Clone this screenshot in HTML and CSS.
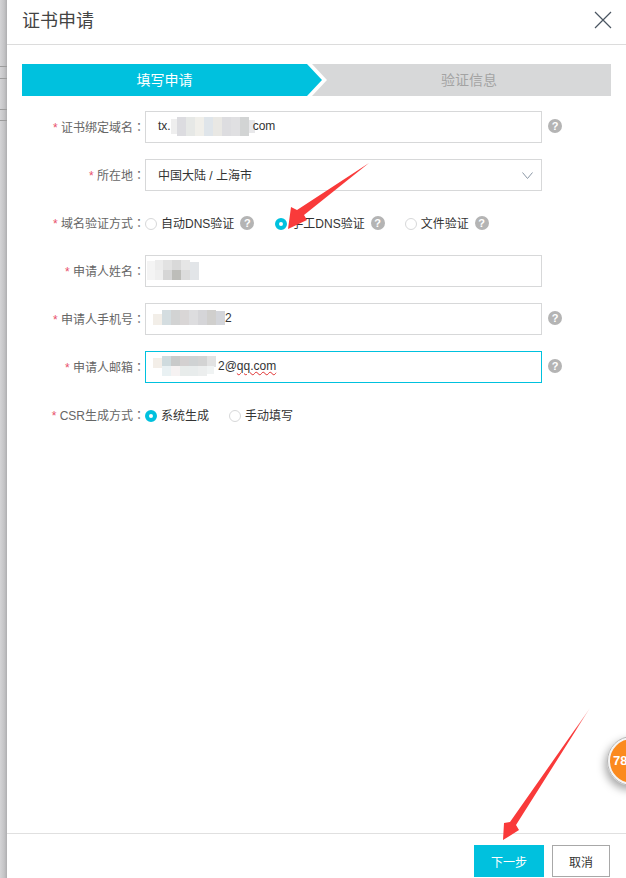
FILE: index.html
```html
<!DOCTYPE html>
<html>
<head>
    <meta charset="utf-8">
    <title>证书申请</title>
    <link rel="stylesheet" href="styles.css">
</head>
<body>
    <div class="page_edge"></div>
    <div class="dialog">
        <div class="dialog_head">
            <h1>证书申请</h1>
            <svg class="close_x" width="18" height="18" viewBox="0 0 18 18"><path d="M1 1L17 17M17 1L1 17" stroke="#4a5561" stroke-width="1.2" fill="none"/></svg>
        </div>

        <div class="dialog_body">
            <div class="steps">
                <div class="step step_on">填写申请</div>
                <svg class="step_tip" width="20" height="32" viewBox="0 0 20 32"><polygon points="0,0 5,0 20,16 5,32 0,32" fill="#fff"/><polygon points="0,0 15,16 0,32" fill="#00c1de"/></svg>
                <div class="step step_off">验证信息</div>
            </div>

            <div class="row">
                <div class="lbl"><span class="star">*</span> 证书绑定域名<span class="colon">：</span></div>
                <div class="field">
                    <span>tx.</span>
                    <svg class="smudge smudge_dom" width="84" height="19" viewBox="0 0 84 19">
                        <rect x="0" y="2" width="9" height="15" fill="#eeeeee"/><rect x="6" y="0" width="9" height="19" fill="#dcdce0"/><rect x="15" y="0" width="9" height="19" fill="#e6e8e6"/><rect x="24" y="0" width="9" height="19" fill="#f0efea"/><rect x="33" y="0" width="9" height="19" fill="#dfe5ea"/><rect x="42" y="0" width="9" height="19" fill="#e9e8e4"/><rect x="51" y="0" width="9" height="19" fill="#dddde0"/><rect x="60" y="0" width="9" height="19" fill="#e0e0e2"/><rect x="69" y="0" width="9" height="19" fill="#d2d4d4"/><rect x="78" y="3" width="6" height="13" fill="#e8e8ea"/>
                    </svg>
                    <span>com</span>
                </div>
                <span class="help">?</span>
            </div>

            <div class="row">
                <div class="lbl"><span class="star">*</span> 所在地<span class="colon">：</span></div>
                <div class="field">
                    <span>中国大陆 / 上海市</span>
                    <svg class="caret" width="11" height="7" viewBox="0 0 11 7"><path d="M0.5 0.5L5.5 6.5L10.5 0.5" stroke="#8a97a5" fill="none"/></svg>
                </div>
            </div>

            <div class="row">
                <div class="lbl"><span class="star">*</span> 域名验证方式<span class="colon">：</span></div>
                <div class="choices">
                    <span class="radio"></span><span class="opt">自动DNS验证</span><span class="help">?</span>
                    <span class="radio radio_on gap_l"></span><span class="opt">手工DNS验证</span><span class="help">?</span>
                    <span class="radio gap_m"></span><span class="opt">文件验证</span><span class="help">?</span>
                </div>
            </div>

            <div class="row">
                <div class="lbl"><span class="star">*</span> 申请人姓名<span class="colon">：</span></div>
                <div class="field field_flush">
                    <svg class="smudge" width="52" height="21" viewBox="0 0 52 21">
                        <rect x="0" y="1" width="8" height="19" fill="#f4f4f4"/><rect x="8" y="0" width="8" height="10" fill="#ececec"/><rect x="16" y="0" width="9" height="10" fill="#e2e2e2"/><rect x="25" y="0" width="9" height="10" fill="#d9d9d9"/><rect x="34" y="0" width="9" height="10" fill="#e6e6e6"/><rect x="43" y="2" width="9" height="8" fill="#e2e5e8"/><rect x="8" y="10" width="8" height="10" fill="#efefef"/><rect x="16" y="10" width="9" height="10" fill="#d6d6d6"/><rect x="25" y="10" width="9" height="10" fill="#bdbdb9"/><rect x="34" y="10" width="9" height="10" fill="#dcdcdc"/><rect x="43" y="10" width="9" height="10" fill="#e2e5e8"/>
                    </svg>
                </div>
            </div>

            <div class="row">
                <div class="lbl"><span class="star">*</span> 申请人手机号<span class="colon">：</span></div>
                <div class="field field_phone">
                    <svg class="smudge" width="72" height="16" viewBox="0 0 72 16">
                        <rect x="0" y="4" width="9" height="11" fill="#f2eee8"/><rect x="9" y="0" width="9" height="15" fill="#d4dde0"/><rect x="18" y="0" width="9" height="15" fill="#d2d3d3"/><rect x="27" y="0" width="9" height="15" fill="#d9d6d6"/><rect x="36" y="0" width="9" height="15" fill="#dddddf"/><rect x="45" y="0" width="9" height="15" fill="#d5d5d8"/><rect x="54" y="0" width="9" height="15" fill="#d0cfcd"/><rect x="63" y="1" width="9" height="14" fill="#d3d5da"/>
                    </svg>
                    <span>2</span>
                </div>
                <span class="help">?</span>
            </div>

            <div class="row">
                <div class="lbl"><span class="star">*</span> 申请人邮箱<span class="colon">：</span></div>
                <div class="field field_on field_phone">
                    <svg class="smudge" width="65" height="20" viewBox="0 0 65 20">
                        <rect x="0" y="2" width="9" height="10" fill="#f3eee8"/><rect x="9" y="0" width="9" height="10" fill="#cfdbde"/><rect x="18" y="0" width="9" height="10" fill="#c9caca"/><rect x="27" y="0" width="9" height="10" fill="#d3d0d0"/><rect x="36" y="0" width="9" height="10" fill="#cfd2d3"/><rect x="45" y="0" width="9" height="10" fill="#d3d3d3"/><rect x="54" y="0" width="9" height="11" fill="#e2e2e2"/><rect x="9" y="10" width="9" height="10" fill="#e9f1f3"/><rect x="18" y="10" width="9" height="10" fill="#f6f2f2"/><rect x="27" y="10" width="9" height="10" fill="#e8eceb"/><rect x="36" y="10" width="9" height="10" fill="#e8ecec"/><rect x="45" y="10" width="9" height="10" fill="#eceeee"/><rect x="54" y="10" width="7" height="8" fill="#f0f3f3"/>
                    </svg>
                    <span>2@<span class="typo">qq.com</span></span>
                </div>
                <span class="help">?</span>
            </div>

            <div class="row">
                <div class="lbl"><span class="star">*</span> CSR生成方式<span class="colon">：</span></div>
                <div class="choices">
                    <span class="radio radio_on"></span><span class="opt">系统生成</span>
                    <span class="radio gap_m"></span><span class="opt">手动填写</span>
                </div>
            </div>
        </div>

        <div class="dialog_foot">
            <button class="btn btn_next">下一步</button>
            <button class="btn btn_cancel">取消</button>
        </div>
    </div>

    <div class="badge"><span>78</span></div>

    <!-- the two red arrows drawn on top of the screenshot -->
    <svg class="marks" width="626" height="878" viewBox="0 0 626 878">
        <defs>
            <linearGradient id="fade" x1="590" y1="708" x2="575" y2="732" gradientUnits="userSpaceOnUse">
                <stop offset="0" stop-color="#fbc4c4"/>
                <stop offset="1" stop-color="#f93a3a"/>
            </linearGradient>
        </defs>
        <polygon points="369,163 304,215 307,220 288,229 291,207 297,210" fill="#f93a3a"/>
        <polygon points="590,708 516,825 519,830 503,840 504,823 510,822" fill="url(#fade)"/>
    </svg>
</body>
</html>
```

FILE: styles.css
```css
html, body { margin: 0; height: 100%; overflow: hidden; }
body { display: flex; background-color: #fff; color: #333; font-family: "Liberation Sans", "Noto Sans CJK SC", sans-serif; font-size: 12px; }

.page_edge {
    width: 7px; flex: none;
    background:
        linear-gradient(#9c9c9c, #9c9c9c) 0 66px / 7px 1px no-repeat,
        linear-gradient(#9c9c9c, #9c9c9c) 0 78px / 7px 1px no-repeat,
        linear-gradient(#9c9c9c, #9c9c9c) 0 109px / 7px 1px no-repeat,
        linear-gradient(#9c9c9c, #9c9c9c) 0 120px / 7px 1px no-repeat,
        linear-gradient(to right, #d4d4d6, #c4c4c6 60%, #aeaeb0);
}

.dialog { flex: 1; display: flex; flex-direction: column; min-width: 0; }

.dialog_head { height: 45px; flex: none; display: flex; align-items: center; justify-content: space-between; padding: 0 14px 4px 16px; box-sizing: border-box; border-bottom: 1px solid #dcdcdc; }
.dialog_head h1 { margin: 0 0 2px -1px; font-size: 18px; font-weight: normal; color: #444; }

.dialog_body { flex: 1; padding: 19px 15px 0; }

.steps { position: relative; display: flex; height: 32px; line-height: 32px; font-size: 14px; text-align: center; background-color: #d7d8d9; }
.step { box-sizing: border-box; }
.step_on { width: 285px; background-color: #00c1de; color: #fff; }
.step_off { flex: 1; color: #a3a3a3; }
.step_tip { flex: none; }

.row { display: flex; align-items: center; height: 32px; margin-top: 16px; }
.steps + .row { margin-top: 15px; }

.lbl { width: 123px; flex: none; padding-bottom: 2px; text-align: right; color: #666; white-space: nowrap; }
.star { color: #e8506c; }
.colon { font-family: "Noto Sans CJK TC", sans-serif; }

.field { width: 397px; height: 32px; box-sizing: border-box; flex: none; display: flex; align-items: center; padding: 0 12px 2px; border: 1px solid #d7d8d9; color: #333; }
.field_flush { padding-left: 1px; }
.field_phone { padding-left: 7px; }
.field_on { border-color: #00c1de; }
.smudge { flex: none; }
.smudge_dom { margin-right: -2px; }
.caret { margin-left: auto; margin-right: -4px; margin-top: 2px; }
.typo { text-decoration: underline wavy #e03030; text-decoration-thickness: 1px; }

.help { width: 14px; height: 14px; flex: none; margin: 0 0 2px 6px; border-radius: 50%; background-color: #b4b4b4; color: #fff; font-size: 11px; font-weight: bold; line-height: 14px; text-align: center; }

.choices { display: flex; align-items: center; color: #333; }
.choices .help { margin: 0 0 0 6px; }
.radio { width: 12px; height: 12px; box-sizing: border-box; flex: none; margin-top: 2px; border: 1px solid #d7d8d9; border-radius: 50%; background-color: #fff; }
.radio_on { border: 4px solid #00c1de; }
.gap_l { margin-left: 21px; }
.gap_m { margin-left: 20px; }
.opt { margin-left: 4px; padding-bottom: 2px; white-space: nowrap; }

.dialog_foot { flex: none; display: flex; justify-content: flex-end; gap: 8px; height: 45px; padding: 11px 16px 0 0; box-sizing: border-box; border-top: 1px solid #e0e0e0; }
.btn { height: 32px; padding: 0; font-family: inherit; font-size: 12px; }
.btn_next { width: 70px; border: 0; background-color: #00c1de; color: #fff; }
.btn_cancel { width: 58px; border: 1px solid #a8a8a8; background-color: #fff; color: #333; }

.badge { position: absolute; left: 607px; top: 736px; width: 50px; height: 50px; box-sizing: border-box; border-radius: 50%; border: 3px solid #f4f4f4; outline: 1px solid #b8b8b8; outline-offset: -1px; background-color: #fb8a1e; box-shadow: -2px 4px 8px rgba(0,0,0,.35); color: #fff; font-size: 13px; font-weight: bold; line-height: 44px; padding-left: 3px; }

.marks { position: absolute; left: 0; top: 0; pointer-events: none; }
```
